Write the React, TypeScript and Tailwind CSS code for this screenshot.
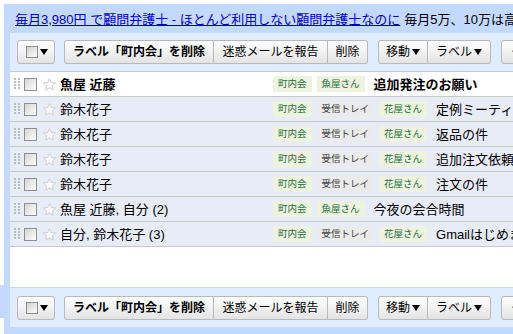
const rows = [
  { sender: '魚屋 近藤', unread: true, labels: ['町内会', '魚屋さん'], subject: '追加発注のお願い' },
  { sender: '鈴木花子', labels: ['町内会', '受信トレイ', '花屋さん'], subject: '定例ミーティングのお知らせ' },
  { sender: '鈴木花子', labels: ['町内会', '受信トレイ', '花屋さん'], subject: '返品の件' },
  { sender: '鈴木花子', labels: ['町内会', '受信トレイ', '花屋さん'], subject: '追加注文依頼' },
  { sender: '鈴木花子', labels: ['町内会', '受信トレイ', '花屋さん'], subject: '注文の件' },
  { sender: '魚屋 近藤, 自分 (2)', labels: ['町内会', '魚屋さん'], subject: '今夜の会合時間' },
  { sender: '自分, 鈴木花子 (3)', labels: ['町内会', '受信トレイ', '花屋さん'], subject: 'Gmailはじめまして' },
]

function Arrow() {
  return (
    <svg width="8" height="6" viewBox="0 0 8 6" className="ml-[2px]">
      <path d="M0 0h8L4 6z" fill="#000" />
    </svg>
  )
}

function Checkbox() {
  return <span className="block w-[13px] h-[13px] border border-[#8e8e8e] bg-linear-to-br from-[#d4d4d4] to-white" />
}

function Grip() {
  return (
    <svg width="6" height="12" viewBox="0 0 6 12">
      {[0, 3, 6, 9].map((y) => (
        <g key={y} fill="#bdbdbd">
          <rect x="0" y={y} width="2" height="2" />
          <rect x="4" y={y} width="2" height="2" />
        </g>
      ))}
    </svg>
  )
}

function Star() {
  return (
    <svg width="15" height="15" viewBox="0 0 24 24">
      <path
        d="M12 2.5l2.9 6.3 6.9.7-5.2 4.6 1.5 6.8L12 17.4l-6.1 3.5 1.5-6.8-5.2-4.6 6.9-.7z"
        fill="#fafafa"
        stroke="#cfcfcf"
        strokeWidth="1.6"
        strokeLinejoin="round"
      />
    </svg>
  )
}

const btn = 'h-[24px] flex items-center border border-[#b9b9b9] bg-linear-to-b from-white to-[#e4e4e4] text-[12px] text-black leading-none'

function Toolbar({ top, bottom }: { top: string; bottom: string }) {
  return (
    <div className={`flex items-center bg-[#e0ecff] pl-[7px] ${top} ${bottom}`}>
      <div className={`${btn} rounded-[3px] w-[38px] pl-[8px]`}>
        <span className="block w-[12px] h-[12px] border border-[#8e8e8e] bg-linear-to-br from-[#cfcfcf] to-white" />
        <Arrow />
      </div>
      <div className="flex ml-[9px]">
        <div className={`${btn} rounded-l-[3px] w-[150px] justify-center font-bold`}>ラベル「町内会」を削除</div>
        <div className={`${btn} border-l-0 w-[114px] justify-center`}>迷惑メールを報告</div>
        <div className={`${btn} border-l-0 rounded-r-[3px] w-[40px] justify-center`}>削除</div>
      </div>
      <div className="flex ml-[10px]">
        <div className={`${btn} rounded-l-[3px] w-[50px] justify-center`}>移動<Arrow /></div>
        <div className={`${btn} border-l-0 rounded-r-[3px] w-[63px] justify-center`}>ラベル<Arrow /></div>
      </div>
      <div className={`${btn} rounded-[3px] ml-[10px] w-[110px] pl-[9px]`}>その他の操作<Arrow /></div>
    </div>
  )
}

function Chip({ name }: { name: string }) {
  const gray = name === '受信トレイ'
  return (
    <span
      className={`h-[16px] px-[5px] flex items-center rounded-[2px] text-[9.5px] leading-none shrink-0 ${
        gray ? 'bg-[#ebebeb] text-[#3f3f3f]' : 'bg-[#eef3e0] text-[#22703a]'
      }`}
    >
      {name}
    </span>
  )
}

export default function App() {
  return (
    <div className="relative w-[513px] h-[334px] overflow-hidden bg-white font-['Liberation_Sans','Noto_Sans_CJK_JP',sans-serif]">
      <div className="absolute left-0 top-[285px] w-[4px] h-[33px] bg-[#c3d9ff]" />
      <div className="ml-[4px] mt-[4px] w-[640px] bg-[#c3d9ff] pl-[6px] pb-[8px]">
        <div className="h-[29px] flex items-center pl-[5px] pt-[2px] text-[13px] leading-none whitespace-nowrap">
          <span className="text-[#0000cc] underline">毎月3,980円 で顧問弁護士 - ほとんど利用しない顧問弁護士なのに</span>
          <span className="ml-[4px] text-black">毎月5万、10万は高すぎます</span>
        </div>
        <div className="bg-white">
          <Toolbar top="pt-[7px]" bottom="pb-[7px]" />
          <div className="border-t border-[#c8c8c8]">
            {rows.map((r, i) => (
              <div
                key={i}
                className={`h-[25px] flex items-center border-b border-[#c8c8c8] pl-[4px] text-[13px] leading-none whitespace-nowrap ${
                  r.unread ? 'bg-white font-bold' : 'bg-[#e8ecf6]'
                }`}
              >
                <Grip />
                <span className="ml-[4px]"><Checkbox /></span>
                <span className="ml-[5px]"><Star /></span>
                <span className="ml-[3px] w-[213px] text-black">{r.sender}</span>
                <div className="flex gap-[5px] font-normal">
                  {r.labels.map((l) => (
                    <Chip key={l} name={l} />
                  ))}
                </div>
                <span className="ml-[9px] text-black">{r.subject}</span>
              </div>
            ))}
          </div>
          <div className="h-[41px] border-b border-[#c3d9ff]" />
          <Toolbar top="pt-[8px]" bottom="pb-[7px]" />
        </div>
      </div>
    </div>
  )
}
